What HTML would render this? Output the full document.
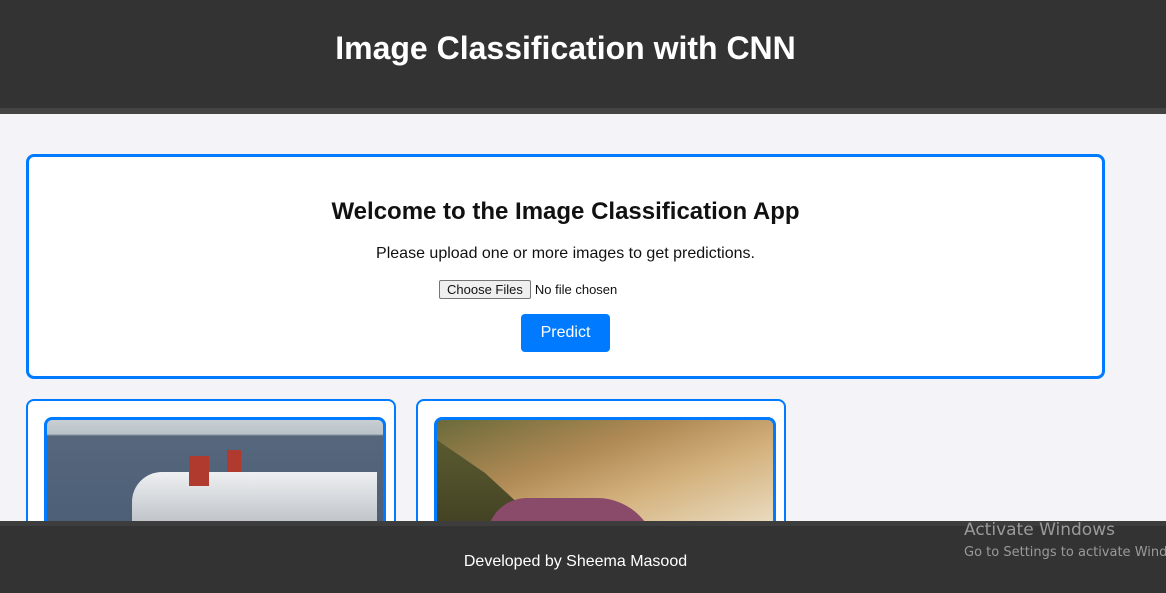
<!DOCTYPE html>
<html><head><meta charset="utf-8"><style>
*{margin:0;padding:0;box-sizing:border-box}
body{width:1166px;height:593px;overflow:hidden;background:#f3f3f8;font-family:"Liberation Sans",Arial,sans-serif;position:relative}
.hdr{position:absolute;left:0;top:0;width:1166px;background:#333;border-bottom:6px solid #444;height:114px}
.hdr h1{position:absolute;left:0;width:1131px;top:30px;text-align:center;color:#fff;font-size:32px;font-weight:bold}
.box{position:absolute;left:26px;top:154px;width:1079px;height:225px;background:#fff;border:3px solid #007bff;border-radius:8px}
.box h2{position:absolute;top:41px;width:100%;text-align:center;font-size:24px;font-weight:bold;color:#111}
.box p{position:absolute;top:88px;width:100%;text-align:center;font-size:16px;color:#111}
.file{position:absolute;left:410px;top:123px;font-size:13px;color:#111;white-space:nowrap}
.file span.b{display:inline-block;background:#efefef;border:1px solid #767676;border-radius:2px;padding:1px 7px;margin-right:4px}
.btn{position:absolute;left:492px;top:157px;width:89px;height:38px;background:#007bff;color:#fff;border-radius:4px;font-size:16px;text-align:center;line-height:37px}
.card{position:absolute;top:399px;width:370px;height:140px;background:#fff;border:2px solid #007bff;border-radius:8px}
.img{position:absolute;left:16px;top:16px;width:342px;height:130px;border:3px solid #007bff;border-radius:8px;overflow:hidden}
.ftr{position:absolute;left:0;top:521px;width:1166px;height:72px;background:#333;border-top:5px solid #3d3d3d}
.ftr p{position:absolute;left:0;width:1151px;top:27px;text-align:center;color:#fff;font-size:16px}
.win{position:absolute;left:964px;top:520px;color:#9a9a9a;font-family:"DejaVu Sans",sans-serif;white-space:nowrap}
</style></head><body>
<div class="hdr"><h1>Image Classification with CNN</h1></div>
<div class="box">
<h2>Welcome to the Image Classification App</h2>
<p>Please upload one or more images to get predictions.</p>
<div class="file"><span class="b">Choose Files</span>No file chosen</div>
<div class="btn">Predict</div>
</div>
<div class="card" style="left:26px"><div class="img" style="background:linear-gradient(#c9cfd3 0,#b9c3c8 14px,#56677c 16px,#4a5d76 100%)">
<div style="position:absolute;left:85px;top:52px;width:245px;height:60px;background:linear-gradient(#eef0f2,#b7bcc2);border-radius:30px 0 0 0"></div>
<div style="position:absolute;left:142px;top:36px;width:20px;height:30px;background:#b03a2e"></div>
<div style="position:absolute;left:180px;top:30px;width:14px;height:22px;background:#b03a2e"></div>
</div></div>
<div class="card" style="left:416px"><div class="img" style="background:linear-gradient(160deg,#6b6a3a 0,#b08a55 35%,#d4b27e 60%,#efe7d2 100%)">
<div style="position:absolute;left:0;top:20px;width:120px;height:110px;background:linear-gradient(#5a5a30,#3c3c20);clip-path:polygon(0 0,40% 30%,100% 90%,100% 100%,0 100%)"></div>
<div style="position:absolute;left:50px;top:78px;width:170px;height:60px;background:#8a4a6a;border-radius:40px 60px 0 0"></div>
</div></div>
<div class="ftr"><p>Developed by Sheema Masood</p></div>
<div class="win"><div style="font-size:17px">Activate Windows</div><div style="font-size:13px;margin-top:5px">Go to Settings to activate Windows.</div></div>
</body></html>
